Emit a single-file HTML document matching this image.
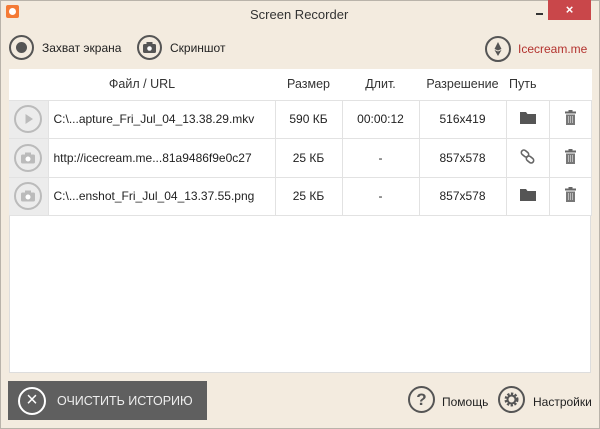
<!DOCTYPE html>
<html><head><meta charset="utf-8"><style>
*{margin:0;padding:0;box-sizing:border-box}
body{width:600px;height:429px;overflow:hidden;background:#f3ebdf;font-family:"Liberation Sans",sans-serif;color:#222;position:relative}
.frame{position:absolute;inset:0;border:1px solid #b9b3aa}
.abs{position:absolute}
.t{font-size:12px;position:absolute;white-space:nowrap}
table{position:absolute;left:9px;top:69px;width:582px;border-collapse:collapse;background:#fff;font-size:12px;table-layout:fixed}
td,th{border:1px solid #e2e2e2;text-align:center;font-weight:normal;padding:0;overflow:hidden;white-space:nowrap}
th{border-top:none;border-left:none;border-right:none;height:31px;font-size:12.5px;color:#333}
td{height:38.5px}
td.ic{background:#ececec;border-left:none}
td.fn{text-align:left;padding-left:5px}
.circ{display:inline-block;width:28px;height:28px;border:2px solid #bbb;border-radius:50%;vertical-align:middle;position:relative}
</style></head><body>
<div class="frame"></div>
<div class="abs" style="left:6px;top:5px;width:13px;height:13px;background:#f47a35;border-radius:2px"><div style="position:absolute;left:3px;top:3px;width:7px;height:7px;border-radius:50%;background:#fff"></div></div>
<div class="t" style="left:250px;top:7px;font-size:13px;color:#333">Screen Recorder</div>
<div class="abs" style="left:536px;top:13px;width:7px;height:2px;background:#333"></div>
<div class="abs" style="left:548px;top:0;width:43px;height:20px;background:#c9474a;color:#fff;text-align:center;font-size:13px;line-height:19px;font-weight:bold">×</div>
<div class="abs" style="left:9px;top:35px;width:25px;height:25px;border:2px solid #555;border-radius:50%"><div style="position:absolute;left:5px;top:5px;width:11px;height:11px;border-radius:50%;background:#555"></div></div>
<div class="t" style="left:42px;top:41px">Захват экрана</div>
<div class="abs" style="left:137px;top:35px;width:25px;height:25px;border:2px solid #555;border-radius:50%">
<svg width="21" height="21" viewBox="0 0 21 21" style="position:absolute;left:0;top:0"><rect x="4" y="7" width="13" height="9" rx="1.5" fill="#555"/><rect x="7.5" y="5" width="6" height="3" fill="#555"/><circle cx="10.5" cy="11.5" r="2.3" fill="#fff"/></svg></div>
<div class="t" style="left:170px;top:41px">Скриншот</div>
<div class="abs" style="left:485px;top:36px;width:26px;height:26px;border:2px solid #555;border-radius:50%">
<svg width="22" height="22" viewBox="0 0 22 22" style="position:absolute;left:0;top:0"><path d="M11 4 L14.5 11 L11 12.5 L7.5 11Z" fill="#555"/><path d="M7.5 12 L11 18 L14.5 12 L11 13.5Z" fill="#555"/></svg></div>
<div class="t" style="left:518px;top:42px;color:#b3322e">Icecream.me</div>
<div class="abs" style="left:9px;top:69px;width:582px;height:304px;background:#fff;border:1px solid #ddd"></div>
<table>
<colgroup><col style="width:39px"><col style="width:227px"><col style="width:67px"><col style="width:77px"><col style="width:87px"><col style="width:43px"><col style="width:42px"></colgroup>
<tr><th colspan="2">Файл / URL</th><th>Размер</th><th>Длит.</th><th>Разрешение</th><th style="text-align:left;padding-left:3px">Путь</th><th></th></tr>
<tr><td class="ic"><span class="circ"><svg width="24" height="24" style="position:absolute;left:0;top:0"><path d="M9.5 7 L17 12 L9.5 17Z" fill="#bbb"/></svg></span></td><td class="fn">C:\...apture_Fri_Jul_04_13.38.29.mkv</td><td>590 КБ</td><td>00:00:12</td><td>516x419</td>
<td><svg width="16" height="13"><path d="M0 1h6l1.5 2H16v10H0z" fill="#555"/></svg></td>
<td><svg width="11" height="15"><rect x="0" y="1.5" width="11" height="2" fill="#666"/><rect x="3.5" y="0" width="4" height="2" fill="#666"/><rect x="1" y="4.5" width="9" height="10.5" fill="#777"/><path d="M3.5 6v7M5.5 6v7M7.5 6v7" stroke="#ccc" stroke-width=".8"/></svg></td></tr>
<tr><td class="ic"><span class="circ"><svg width="24" height="24" style="position:absolute;left:0;top:0"><rect x="5" y="8.5" width="14" height="9" rx="1.5" fill="#bbb"/><rect x="9" y="6.5" width="6" height="3" fill="#bbb"/><circle cx="12" cy="13" r="2.5" fill="#fff"/></svg></span></td><td class="fn">http://icecream.me...81a9486f9e0c27</td><td>25 КБ</td><td>-</td><td>857x578</td>
<td><svg width="15" height="15"><g fill="none" stroke="#666" stroke-width="1.6"><rect x="1" y="2" width="8" height="5" rx="2.5" transform="rotate(40 5 4.5)"/><rect x="6" y="8" width="8" height="5" rx="2.5" transform="rotate(40 10 10.5)"/></g></svg></td>
<td><svg width="11" height="15"><rect x="0" y="1.5" width="11" height="2" fill="#666"/><rect x="3.5" y="0" width="4" height="2" fill="#666"/><rect x="1" y="4.5" width="9" height="10.5" fill="#777"/><path d="M3.5 6v7M5.5 6v7M7.5 6v7" stroke="#ccc" stroke-width=".8"/></svg></td></tr>
<tr><td class="ic"><span class="circ"><svg width="24" height="24" style="position:absolute;left:0;top:0"><rect x="5" y="8.5" width="14" height="9" rx="1.5" fill="#bbb"/><rect x="9" y="6.5" width="6" height="3" fill="#bbb"/><circle cx="12" cy="13" r="2.5" fill="#fff"/></svg></span></td><td class="fn">C:\...enshot_Fri_Jul_04_13.37.55.png</td><td>25 КБ</td><td>-</td><td>857x578</td>
<td><svg width="16" height="13"><path d="M0 1h6l1.5 2H16v10H0z" fill="#555"/></svg></td>
<td><svg width="11" height="15"><rect x="0" y="1.5" width="11" height="2" fill="#666"/><rect x="3.5" y="0" width="4" height="2" fill="#666"/><rect x="1" y="4.5" width="9" height="10.5" fill="#777"/><path d="M3.5 6v7M5.5 6v7M7.5 6v7" stroke="#ccc" stroke-width=".8"/></svg></td></tr>
</table>
<div class="abs" style="left:8px;top:381px;width:199px;height:39px;background:#5f5f5f"></div>
<div class="abs" style="left:18px;top:387px;width:28px;height:28px;border:2px solid #fff;border-radius:50%;color:#fff;text-align:center;font-size:20px;line-height:23px">×</div>
<div class="t" style="left:57px;top:394px;color:#eee;font-size:12.5px">ОЧИСТИТЬ ИСТОРИЮ</div>
<div class="abs" style="left:408px;top:386px;width:27px;height:27px;border:2px solid #555;border-radius:50%;text-align:center;font-size:17px;line-height:23px;color:#555;font-weight:bold">?</div>
<div class="t" style="left:442px;top:395px">Помощь</div>
<div class="abs" style="left:498px;top:386px;width:27px;height:27px;border:2px solid #555;border-radius:50%">
<svg width="23" height="23" viewBox="0 0 23 23" style="position:absolute;left:0;top:0"><circle cx="11.5" cy="11.5" r="5.5" fill="none" stroke="#555" stroke-width="3" stroke-dasharray="2.2 1.4"/><circle cx="11.5" cy="11.5" r="4" fill="none" stroke="#555" stroke-width="2"/></svg></div>
<div class="t" style="left:533px;top:395px">Настройки</div>
</body></html>
